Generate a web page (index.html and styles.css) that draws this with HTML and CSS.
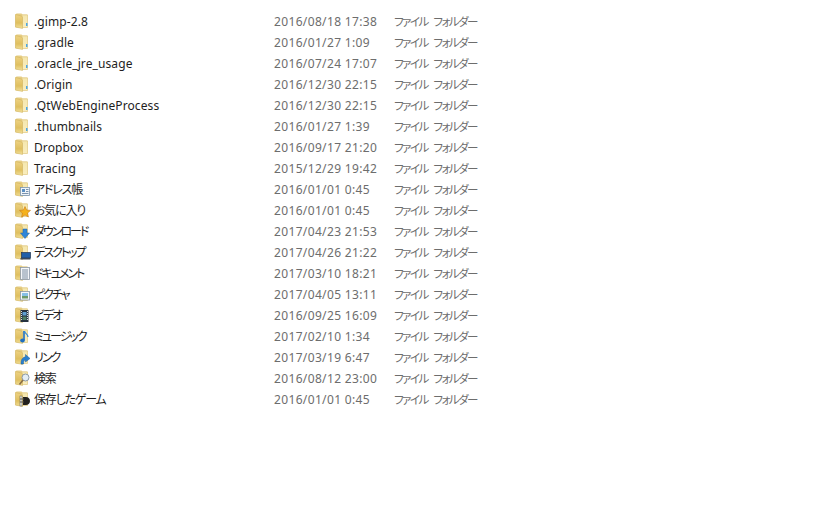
FILE: index.html
```html
<!DOCTYPE html>
<html lang="ja">
<head>
    <meta charset="UTF-8">
    <title>Files</title>
    <link rel="stylesheet" href="styles.css">
</head>
<body>
    <svg class="defs" width="0" height="0">
        <defs>
            <linearGradient id="left" x1="0" y1="0" x2="0" y2="1">
                <stop offset="0" stop-color="#eed283"/>
                <stop offset=".6" stop-color="#dfbf5f"/>
                <stop offset="1" stop-color="#f2e09a"/>
            </linearGradient>
            <linearGradient id="right" x1="0" y1="0" x2="0" y2="1">
                <stop offset="0" stop-color="#f5e7ae"/>
                <stop offset="1" stop-color="#f9edbd"/>
            </linearGradient>
            <symbol id="folder" viewBox="0 0 16 16">
                <path d="M0.500 1.500 L1.500 .5 H6.500 L7.500 1.500 H12.500 V14.500 H0.500 Z" fill="#e6cd82"/>
                <path d="M7 2 H12.500 V14.500 H7 Z" fill="url(#right)" stroke="#dcc27a" stroke-width=".5"/>
                <path d="M0.500 1.500 L6.500 3 L7.500 4 V15.500 L0.500 14 Z" fill="url(#left)" stroke="#cfb05a" stroke-width=".5"/>
            </symbol>
        </defs>
    </svg>

    <div class="list">
        <div class="row">
            <svg class="icon"><use href="#folder"/><rect x="11" y="10" width="1.500" height="3" fill="#4aa6e6"/></svg>
            <span class="name">.gimp-2.8</span><span class="date">2016/08/18 17:38</span><span class="type">ファイル フォルダー</span>
        </div>
        <div class="row">
            <svg class="icon"><use href="#folder"/><rect x="11" y="10" width="1.500" height="3" fill="#4aa6e6"/></svg>
            <span class="name">.gradle</span><span class="date">2016/01/27 1:09</span><span class="type">ファイル フォルダー</span>
        </div>
        <div class="row">
            <svg class="icon"><use href="#folder"/><rect x="11" y="10" width="1.500" height="3" fill="#4aa6e6"/></svg>
            <span class="name">.oracle_jre_usage</span><span class="date">2016/07/24 17:07</span><span class="type">ファイル フォルダー</span>
        </div>
        <div class="row">
            <svg class="icon"><use href="#folder"/><rect x="11" y="10" width="1.500" height="3" fill="#4aa6e6"/></svg>
            <span class="name">.Origin</span><span class="date">2016/12/30 22:15</span><span class="type">ファイル フォルダー</span>
        </div>
        <div class="row">
            <svg class="icon"><use href="#folder"/><rect x="11" y="10" width="1.500" height="3" fill="#4aa6e6"/></svg>
            <span class="name">.QtWebEngineProcess</span><span class="date">2016/12/30 22:15</span><span class="type">ファイル フォルダー</span>
        </div>
        <div class="row">
            <svg class="icon"><use href="#folder"/><rect x="11" y="10" width="1.500" height="3" fill="#4aa6e6"/></svg>
            <span class="name">.thumbnails</span><span class="date">2016/01/27 1:39</span><span class="type">ファイル フォルダー</span>
        </div>
        <div class="row">
            <svg class="icon"><use href="#folder"/></svg>
            <span class="name">Dropbox</span><span class="date">2016/09/17 21:20</span><span class="type">ファイル フォルダー</span>
        </div>
        <div class="row">
            <svg class="icon"><use href="#folder"/></svg>
            <span class="name">Tracing</span><span class="date">2015/12/29 19:42</span><span class="type">ファイル フォルダー</span>
        </div>
        <div class="row">
            <svg class="icon"><use href="#folder"/><rect x="5.500" y="6.500" width="9" height="8" fill="#eef3f8" stroke="#7b93ad" stroke-width=".8"/><rect x="7" y="8" width="3" height="3" fill="#5b8fc2"/><path d="M11 8.500 H13.500 M11 10.500 H13.500 M7 12.500 H13.500" stroke="#7b93ad"/></svg>
            <span class="name jp">アドレス帳</span><span class="date">2016/01/01 0:45</span><span class="type">ファイル フォルダー</span>
        </div>
        <div class="row">
            <svg class="icon"><use href="#folder"/><path d="M10 4.500 L11.600 8 L15.500 8.400 L12.600 11 L13.400 15 L10 13 L6.600 15 L7.400 11 L4.500 8.400 L8.400 8 Z" fill="#f5b21c" stroke="#c9791a" stroke-width=".6"/></svg>
            <span class="name jp">お気に入り</span><span class="date">2016/01/01 0:45</span><span class="type">ファイル フォルダー</span>
        </div>
        <div class="row">
            <svg class="icon"><use href="#folder"/><path d="M8 6 H12 V10 H14.500 L10 15.500 L5.500 10 H8 Z" fill="#2f86d8" stroke="#1e63a8" stroke-width=".5"/></svg>
            <span class="name kana">ダウンロード</span><span class="date">2017/04/23 21:53</span><span class="type">ファイル フォルダー</span>
        </div>
        <div class="row">
            <svg class="icon"><use href="#folder"/><rect x="6.500" y="8.500" width="9" height="5.500" fill="#1f5fa8" stroke="#23364f" stroke-width=".7"/><rect x="5.500" y="14" width="10" height="1.500" fill="#3a4a5c"/></svg>
            <span class="name kana">デスクトップ</span><span class="date">2017/04/26 21:22</span><span class="type">ファイル フォルダー</span>
        </div>
        <div class="row">
            <svg class="icon"><use href="#folder"/><rect x="5.500" y="2.500" width="9" height="12" fill="#f4f6f9" stroke="#8a97a6" stroke-width=".8"/><path d="M7 5 H13 M7 7 H13 M7 9 H13 M7 11 H13 M7 13 H13" stroke="#7d8fa3"/></svg>
            <span class="name kana">ドキュメント</span><span class="date">2017/03/10 18:21</span><span class="type">ファイル フォルダー</span>
        </div>
        <div class="row">
            <svg class="icon"><use href="#folder"/><rect x="5.500" y="5.500" width="9" height="8.500" fill="#f4f7f9" stroke="#8a97a6" stroke-width=".8"/><rect x="7" y="7" width="6" height="3" fill="#86bfe6"/><rect x="7" y="10" width="6" height="2.500" fill="#6d9a6a"/></svg>
            <span class="name kana">ピクチャ</span><span class="date">2017/04/05 13:11</span><span class="type">ファイル フォルダー</span>
        </div>
        <div class="row">
            <svg class="icon"><use href="#folder"/><rect x="5.500" y="3" width="8" height="12" fill="#26323f"/><rect x="7.500" y="5" width="4" height="3.500" fill="#5f9fd0"/><rect x="7.500" y="9.500" width="4" height="3.500" fill="#4d7f64"/><path d="M6.500 4 V14 M12.500 4 V14" stroke="#cfd8e0" stroke-dasharray="1 1"/></svg>
            <span class="name kana">ビデオ</span><span class="date">2016/09/25 16:09</span><span class="type">ファイル フォルダー</span>
        </div>
        <div class="row">
            <svg class="icon"><use href="#folder"/><path d="M9 3 V12" stroke="#1f6fc0" stroke-width="1.600"/><path d="M9.500 3 C10 6 13 6 13 9" stroke="#2f86d8" stroke-width="1.200" fill="none"/><ellipse cx="7.500" cy="12.500" rx="2.300" ry="1.900" fill="#1f6fc0"/></svg>
            <span class="name kana">ミュージック</span><span class="date">2017/02/10 1:34</span><span class="type">ファイル フォルダー</span>
        </div>
        <div class="row">
            <svg class="icon"><use href="#folder"/><path d="M6 15 C6 10 8 8 10.500 8 V5.500 L15 9.500 L10.500 13 V11 C9 11 8.500 12.500 8.500 15 Z" fill="#2a80cf" stroke="#1b5c9c" stroke-width=".5"/></svg>
            <span class="name kana">リンク</span><span class="date">2017/03/19 6:47</span><span class="type">ファイル フォルダー</span>
        </div>
        <div class="row">
            <svg class="icon"><use href="#folder"/><circle cx="10.500" cy="7.500" r="3.500" fill="#e3edf3" stroke="#8c9aa6"/><path d="M8 10 L4.500 14.500" stroke="#8a6f45" stroke-width="1.600"/></svg>
            <span class="name jp">検索</span><span class="date">2016/08/12 23:00</span><span class="type">ファイル フォルダー</span>
        </div>
        <div class="row">
            <svg class="icon"><use href="#folder"/><path d="M8 6 H11 C13.500 6 15 8 15 10 C15 12.500 13 14 11 14 H8 Z" fill="#23211e"/><rect x="5" y="5" width="2" height="10" fill="#f0f0ea" stroke="#55534d" stroke-width=".5"/><path d="M5 8 H9 M5 11 H9" stroke="#55534d"/></svg>
            <span class="name jp">保存したゲーム</span><span class="date">2016/01/01 0:45</span><span class="type">ファイル フォルダー</span>
        </div>
    </div>
</body>
</html>
```

FILE: styles.css
```css
html, body {
    margin: 0;
    background-color: #fff;
}
body {
    font-family: "Noto Sans", "Noto Sans CJK JP", sans-serif;
    font-size: 12px;
    line-height: 16px;
    font-feature-settings: "palt";
    color: #6d6d6d;
    height: 506px;
    overflow: hidden;
}
.defs {
    display: block;
    height: 0;
}
.list {
    padding: 11px 0 0 15px;
}
.row {
    display: flex;
    align-items: center;
    height: 21px;
    white-space: nowrap;
}
.icon {
    width: 16px;
    height: 16px;
    flex: none;
    margin: -1px 3px 0 0;
}
.name {
    width: 240px;
    color: #1e1e1e;
    letter-spacing: 0.1px;
}
.name.jp {
    letter-spacing: -1.2px;
    padding-top: 1px;
}
.name.kana {
    letter-spacing: -2px;
    padding-top: 1px;
}
.date {
    width: 119px;
    letter-spacing: 0.35px;
}
.type {
    font-size: 11.5px;
    letter-spacing: -1.5px;
    word-spacing: 4px;
    padding: 1px 0 0 1px;
}
```
